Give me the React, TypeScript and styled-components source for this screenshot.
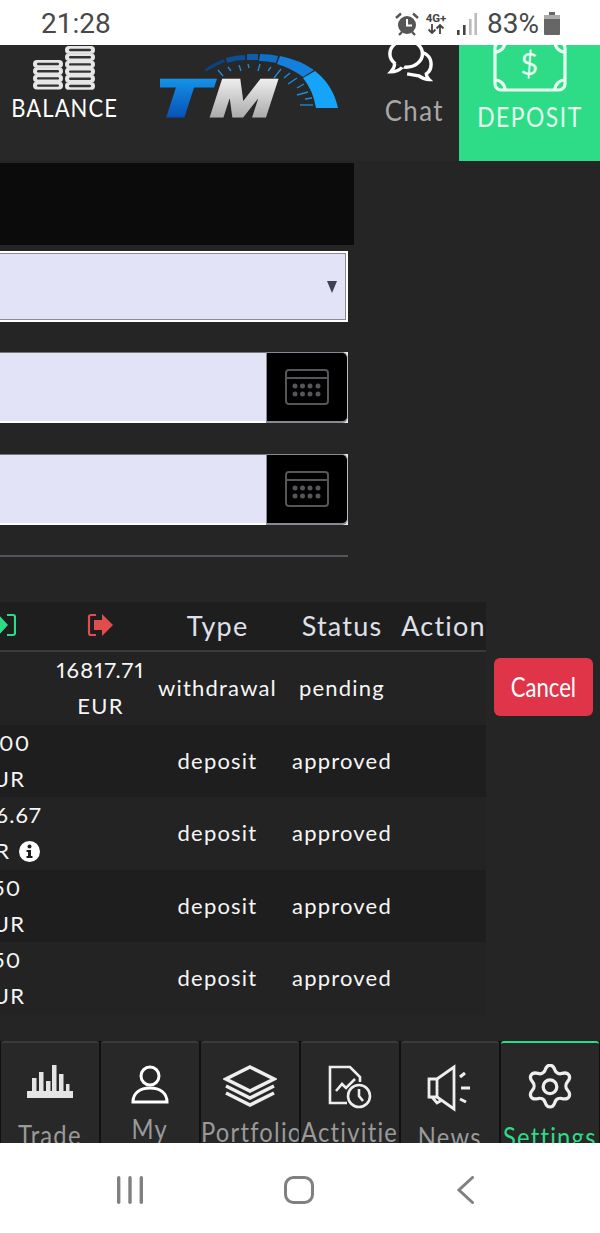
import React from "react";
import styled, { createGlobalStyle } from "styled-components";

const Global = createGlobalStyle`
  html, body { margin: 0; padding: 0; background: #fff; }
  * { box-sizing: border-box; }
  body { font-family: "Lato", "Liberation Sans", sans-serif; }
`;

const Screen = styled.div`
  width: 600px; height: 1233px; overflow: hidden;
  display: flex; flex-direction: column; background: #252525;
`;
const StatusBar = styled.div`
  height: 45px; flex: none; background: #fff; display: flex; align-items: center;
  padding: 2px 40px 0 41px; color: #484848; font-family: "Roboto", sans-serif; font-size: 28px;
`;
const Clock = styled.span` flex: 1; `;
const StatusIcons = styled.div` display: flex; align-items: center; `;
const NetBlock = styled.div`
  display: flex; flex-direction: column; align-items: center; width: 24px; margin: 0 9px 0 4px;
  font: 700 11.5px/11px "Roboto", sans-serif; color: #444;
`;
const Percent = styled.span` margin: 0 5px 0 10px; `;

const Header = styled.header`
  height: 116px; flex: none; background: #282828; display: flex; overflow: hidden;
`;
const NarrowText = styled.span<{ $sx: number }>`
  display: inline-block; white-space: nowrap; transform: scaleX(${(p) => p.$sx});
`;
const BalanceItem = styled.div`
  width: 130px; display: flex; flex-direction: column; align-items: center;
  color: #fff; font-size: 25px; letter-spacing: 1.2px; line-height: 30px;
`;
const LogoItem = styled.div` width: 240px; padding: 8px 0 0 30px; `;
const ChatItem = styled.div`
  width: 89px; display: flex; flex-direction: column; align-items: center;
  color: #a8a8a8; font-size: 29px; letter-spacing: 1.6px; line-height: 34px;
`;
const DepositItem = styled.div`
  width: 141px; background: #2edc87; display: flex; flex-direction: column; align-items: center;
  color: #e4fff0; font-size: 26px; letter-spacing: 1.7px; line-height: 30px;
`;
const HeaderIcon = styled.svg<{ $mb: number; $mt?: number; $mr?: number }>`
  display: block; flex: none; margin-bottom: ${(p) => p.$mb}px; margin-top: ${(p) => p.$mt ?? 0}px;
  margin-right: ${(p) => p.$mr ?? 0}px;
`;

const Main = styled.main`
  flex: 1; min-height: 0; background: #252525; padding-top: 2px;
`;
const Content = styled.div` margin-left: -45px; width: 645px; `;
const BlackBox = styled.div` width: 399px; height: 82px; background: #0b0b0b; margin-bottom: 6px; `;
const SelectField = styled.div`
  width: 393px; height: 71px; background: #e3e3f8; border: 2px solid #fff; outline: 1px solid #8b8b94; outline-offset: -3px;
  display: flex; align-items: center; justify-content: flex-end; padding-right: 9px; margin-bottom: 30px;
`;
const Caret = styled.div`
  width: 0; height: 0; border-left: 5.5px solid transparent; border-right: 5.5px solid transparent;
  border-top: 12px solid #3e4150;
`;
const DateGroup = styled.div<{ $mb: number }>`
  width: 393px; height: 71px; display: flex; margin-bottom: ${(p) => p.$mb}px; background: #e8e8e8;
`;
const DateInput = styled.div`
  flex: 1; background: #e3e3f8; border-bottom: 2px solid #fff; border-top: 1px solid #777;
`;
const DateAddon = styled.div`
  width: 82px; background: #000; border: 1px solid #858a93; border-bottom-width: 2px; border-right-color: #b8bcc2;
  border-radius: 0 6px 6px 0; display: flex; align-items: center; justify-content: center;
`;
const Divider = styled.hr`
  width: 393px; height: 2px; margin: 0 0 45px; border: 0; background: #55555e;
`;

const TableHead = styled.div`
  width: 531px; height: 50px; background: #1e1e1e; border-bottom: 2px solid #3a3a3a; padding-bottom: 2px;
  display: grid; grid-template-columns: 94px 103px 131px 118px 85px; align-items: center;
  color: #dfe0ea; font-size: 27px; letter-spacing: 1.2px; text-align: center;
`;
const HeadCell = styled.div` display: flex; justify-content: center; white-space: nowrap; `;
const RowWrap = styled.div` display: flex; align-items: center; height: 72.5px; `;
const Row = styled.div<{ $alt: boolean }>`
  width: 531px; height: 100%; background: ${(p) => (p.$alt ? "#1e1e1e" : "#232323")};
  display: grid; grid-template-columns: 94px 103px 131px 118px 85px; align-items: center;
  color: #f6f6f6; font-size: 22px; letter-spacing: 1.2px; line-height: 36px; text-align: center;
  font-feature-settings: "pnum" 1; font-variant-numeric: proportional-nums;
`;
const Cell = styled.div` white-space: nowrap; position: relative; `;
const Info = styled.svg` vertical-align: -3px; margin-left: 9px; `;
const CancelBtn = styled.button`
  width: 99px; height: 58px; margin: 0 0 2px 8px; background: #e03549; border: 0; border-radius: 6px;
  color: #fff; font: 400 26px "Lato", sans-serif; padding: 0;
`;

const BottomNav = styled.nav`
  height: 102px; flex: none; display: grid; grid-template-columns: repeat(6, 100px); overflow: hidden; background: #111;
`;
const Tab = styled.div<{ $active?: boolean }>`
  height: 102px; margin: 0 1px; background: #282828; overflow: hidden; border-radius: 3px 3px 0 0;
  border-top: 2px solid ${(p) => (p.$active ? "#2edc87" : "#3a3a3a")};
  display: flex; flex-direction: column; align-items: center;
  color: ${(p) => (p.$active ? "#2edc87" : "#9a9a9a")};
`;
const TabIcon = styled.svg` display: block; flex: none; margin-top: 21px; `;
const TabLabel = styled.div<{ $mt: number }>`
  margin-top: ${(p) => p.$mt}px; font-size: 27px; line-height: 32px; letter-spacing: 1.4px; white-space: nowrap;
  align-self: flex-start; flex: none; width: 111px; overflow: hidden; text-align: center;
  transform-origin: 0 0; transform: scaleX(0.88);
`;

const AndroidBar = styled.div`
  height: 90px; flex: none; background: #fff; display: grid; grid-template-columns: 117px 26px 141px 30px 143px 17px; align-items: center; padding-top: 4px;
`;
const Spacer = styled.div``;

const AlarmIcon = () => (
  <svg width="26" height="24" viewBox="0 0 26 24">
    <circle cx="13" cy="13" r="9" fill="#555" />
    <path d="M13 7v6.5h5" fill="none" stroke="#fff" strokeWidth="2" />
    <path d="M2 6l5-4.5M24 6l-5-4.5M5 23l3-3M21 23l-3-3" stroke="#555" strokeWidth="2.4" fill="none" />
  </svg>
);
const SignalIcon = () => (
  <svg width="20" height="22" viewBox="0 0 20 22">
    <rect x="0" y="17" width="2.6" height="5" fill="#444" />
    <rect x="6" y="12" width="2.6" height="10" fill="#444" />
    <rect x="12" y="6" width="2.6" height="16" fill="#bbb" />
    <rect x="17.4" y="0" width="2.6" height="22" fill="#bbb" />
  </svg>
);
const BatteryIcon = () => (
  <svg width="16" height="23" viewBox="0 0 16 23">
    <path d="M5 0h6v3h4a1 1 0 0 1 1 1v18a1 1 0 0 1-1 1H1a1 1 0 0 1-1-1V4a1 1 0 0 1 1-1h4z" fill="#666" />
    <rect x="0" y="3" width="16" height="4" fill="#aaa" />
  </svg>
);
const CoinStack = ({ x, top, n }: { x: number; top: number; n: number }) => (
  <g>
    {Array.from({ length: n }).map((_, i) => (
      <g key={i}>
        <rect x={x} y={top + i * 7.2} width="30" height="7.8" rx="3.9" fill="#e6e6e6" />
        <rect x={x + 4} y={top + 2.8 + i * 7.2} width="22" height="2.4" rx="1.2" fill="#333" />
      </g>
    ))}
  </g>
);
const CoinsIcon = () => (
  <HeaderIcon $mb={1} $mt={1} width="64" height="45" viewBox="0 0 64 45">
    <CoinStack x={0} top={14} n={4} />
    <CoinStack x={32} top={0} n={6} />
  </HeaderIcon>
);
const ChatIcon = () => (
  <HeaderIcon $mb={11} $mt={-8} $mr={9} width="46" height="45" viewBox="0 0 48 46">
    <path d="M30 15c10 0 16 5 16 13 0 4-2 8-5 10 0 2 1 4 3 6-5 0-8-2-11-4l-12-2" fill="none" stroke="#fff" strokeWidth="3.6" />
    <ellipse cx="20" cy="17" rx="17" ry="14" fill="#282828" stroke="#fff" strokeWidth="3.6" />
    <path d="M8 27c0 3-1 6-4 9 5 0 9-2 12-5" fill="#282828" stroke="#fff" strokeWidth="3.4" />
    <path d="M10 26l8 4" stroke="#282828" strokeWidth="4" />
  </HeaderIcon>
);
const NoteIcon = () => (
  <HeaderIcon $mb={10} $mt={-5} width="74" height="52" viewBox="0 0 74 52" fill="none" stroke="#e8fff2" strokeWidth="3.2">
    <rect x="2" y="2" width="70" height="48" rx="6" />
    <path d="M2 12a10 10 0 0 0 10-10M62 2a10 10 0 0 0 10 10M72 40a10 10 0 0 0-10 10M12 50a10 10 0 0 0-10-10" />
    <text x="37" y="35" textAnchor="middle" fill="#e8fff2" stroke="none" fontSize="31" fontFamily="Lato, sans-serif">$</text>
  </HeaderIcon>
);

const ticks = [
  [218, 70, 223, 76], [228, 67, 231, 71], [239, 65, 241, 71], [248, 64, 249, 68], [260, 64, 258, 71],
  [271, 67, 268, 71], [281, 69, 274, 78], [290, 73, 284, 78], [297, 78, 288, 84], [304, 84, 297, 88],
  [308, 92, 297, 95], [312, 98, 305, 99], [313, 105, 300, 105],
];
const Logo = () => (
  <svg width="180" height="67" viewBox="160 53 180 67">
    <defs>
      <linearGradient id="tmBlue" x1="0" y1="0" x2="0" y2="1">
        <stop offset="0" stopColor="#18a2f6" />
        <stop offset="1" stopColor="#0442a8" />
      </linearGradient>
      <linearGradient id="tmGrey" x1="0" y1="0" x2="0" y2="1">
        <stop offset="0" stopColor="#ffffff" />
        <stop offset="1" stopColor="#9a9a9a" />
      </linearGradient>
    </defs>
    <path d="M315 71Q333 85 338 108H316Q313 90 303 78Z" fill="#16a4fb" />
    <path d="M280 56Q300 60 314 70L303 77Q291 68 277 64Z" fill="#1280dc" />
    <path d="M260 54Q270 54 278 56L276 63Q268 61 259 61Z" fill="#0f6fc6" />
    <polygon points="247,54 258,54 258,60 247,60" fill="#0d5fae" />
    <path d="M226 58Q235 55 245 55V60Q236 60 227 63Z" fill="#0c4f94" />
    <path d="M204 70Q213 63 224 59L225 62Q215 66 207 71Z" fill="#0b4380" />
    {ticks.map((t, i) => (
      <line key={i} x1={t[0]} y1={t[1]} x2={t[2]} y2={t[3]} stroke="#1b8fdc" strokeWidth="1.3" />
    ))}
    <g transform="skewX(-18)" fontFamily="Liberation Sans, sans-serif" fontWeight="700" fontSize="52">
      <text x="186" y="116" textLength="55" lengthAdjust="spacingAndGlyphs" fill="url(#tmBlue)" stroke="url(#tmBlue)" strokeWidth="3">T</text>
      <text x="245" y="116" textLength="62" lengthAdjust="spacingAndGlyphs" fill="url(#tmGrey)" stroke="url(#tmGrey)" strokeWidth="3">M</text>
    </g>
  </svg>
);
const EnterIcon = () => (
  <svg width="27" height="24" viewBox="0 0 27 24">
    <path d="M0 7h8V0l11 12-11 12v-7H0z" fill="#2edc87" />
    <path d="M18 2h6a2 2 0 0 1 2 2v16a2 2 0 0 1-2 2h-6" fill="none" stroke="#2edc87" strokeWidth="2.2" />
  </svg>
);
const ExitIcon = () => (
  <svg width="27" height="24" viewBox="0 0 27 24">
    <path d="M9 2H4a2 2 0 0 0-2 2v16a2 2 0 0 0 2 2h5" fill="none" stroke="#e04d4d" strokeWidth="2.2" />
    <path d="M7 7h8V1l11 11-11 11v-6H7z" fill="#e04d4d" />
  </svg>
);
const InfoIcon = () => (
  <Info width="21" height="21" viewBox="0 0 21 21">
    <circle cx="10.5" cy="10.5" r="10.5" fill="#fff" />
    <circle cx="10.5" cy="5.5" r="2" fill="#1e1e1e" />
    <path d="M7.5 9h4.5v6h1.5v2h-6v-2H9v-4H7.5z" fill="#1e1e1e" />
  </Info>
);
const CalendarIcon = () => (
  <svg width="44" height="36" viewBox="0 0 44 36" fill="none">
    <rect x="1" y="1" width="42" height="34" rx="3" stroke="#55555a" strokeWidth="2" />
    <path d="M1 9h42" stroke="#55555a" strokeWidth="2" />
    {[10, 17.5, 25, 33].map((x) =>
      [17, 25].map((y) => <circle key={`${x}-${y}`} cx={x} cy={y} r="2.5" fill="#55555a" />)
    )}
  </svg>
);

const BarsTab = () => (
  <TabIcon width="46" height="44" viewBox="0 0 46 44" fill="#e4e4e4">
    <rect x="0" y="27" width="46" height="7" />
    <rect x="5" y="14" width="4.500" height="14" /><rect x="12" y="8" width="4.500" height="20" />
    <rect x="19" y="17" width="4.500" height="11" /><rect x="25" y="1" width="4.500" height="27" />
    <rect x="32" y="10" width="4.500" height="18" /><rect x="39" y="20" width="3.500" height="8" />
  </TabIcon>
);
const UserTab = () => (
  <TabIcon width="40" height="44" viewBox="0 0 40 44" fill="none" stroke="#fff" strokeWidth="3">
    <circle cx="20" cy="12" r="9" />
    <path d="M3 38c0-9 7-14 17-14s17 5 17 14z" />
  </TabIcon>
);
const LayersTab = () => (
  <TabIcon width="54" height="46" viewBox="0 0 54 46" fill="none" stroke="#eee" strokeWidth="3.4">
    <path d="M27 3l24 12-24 12L3 15z" />
    <path d="M3 22l24 12 24-12" />
    <path d="M3 29l24 12 24-12" />
  </TabIcon>
);
const ActivityTab = () => (
  <TabIcon width="46" height="46" viewBox="0 0 46 46" fill="none" stroke="#eee" strokeWidth="2.6">
    <path d="M20 39H3V3h20l10 10v5" />
    <path d="M9 27l6-7 4 4 9-9" />
    <circle cx="32" cy="32" r="11" fill="#282828" />
    <path d="M32 25v7l4 5" />
  </TabIcon>
);
const NewsTab = () => (
  <TabIcon width="46" height="48" viewBox="0 0 46 48" fill="none" stroke="#eee" strokeWidth="2.8">
    <path d="M27 3v42L10 33H2V15h8z" />
    <path d="M10 15v18M5 33l5 6 5-3" />
    <path d="M33 13l5-4M34 24h9M33 35l6 3" strokeWidth="3" />
  </TabIcon>
);
const GearTab = () => (
  <TabIcon width="46" height="48" viewBox="3 2.5 18 19" fill="none" stroke="#eee" strokeWidth="1.3" strokeLinejoin="round">
    <path d="M12 1.500c1.200 0 1.600.8 2 2 .4 1.100 1.600 1.700 2.800 1.200 1.200-.3 2-.4 2.700.7.600 1 .2 1.800-.6 2.700-.8.900-.8 2.300 0 3.200.8.900 1.200 1.700.6 2.700-.7 1.100-1.500 1-2.700.7-1.200-.4-2.400.2-2.800 1.300-.4 1.200-.8 2-2 2s-1.600-.8-2-2c-.4-1.100-1.600-1.700-2.800-1.300-1.200.3-2 .4-2.700-.7-.6-1-.2-1.800.6-2.700.8-.9.8-2.300 0-3.200-.8-.9-1.200-1.700-.6-2.700.7-1.100 1.500-1 2.700-.7 1.200.5 2.400-.1 2.800-1.200.4-1.200.8-2 2-2z" transform="translate(0 1.500)" />
    <circle cx="12" cy="11.500" r="2.700" />
  </TabIcon>
);

const rows = [
  { inn: "", out: ["16817.71", "EUR"], type: "withdrawal", status: "pending", cancel: true },
  { inn: ["1000", "EUR"], out: "", type: "deposit", status: "approved" },
  { inn: ["1166.67", "EUR"], out: "", type: "deposit", status: "approved", info: true },
  { inn: ["150", "EUR"], out: "", type: "deposit", status: "approved" },
  { inn: ["150", "EUR"], out: "", type: "deposit", status: "approved" },
];

export default function App() {
  return (
    <Screen>
      <Global />
      <StatusBar>
        <Clock>21:28</Clock>
        <StatusIcons>
          <AlarmIcon />
          <NetBlock>
            <span>4G+</span>
            <svg width="18" height="10" viewBox="0 0 18 10" fill="none" stroke="#444" strokeWidth="1.800">
              <path d="M5 0v9M1.500 5.500L5 9l3.500-3.500M13 10V1M9.500 4.500L13 1l3.500 3.500" />
            </svg>
          </NetBlock>
          <SignalIcon />
          <Percent>83%</Percent>
          <BatteryIcon />
        </StatusIcons>
      </StatusBar>

      <Header>
        <BalanceItem>
          <CoinsIcon />
          <NarrowText $sx={0.88}>BALANCE</NarrowText>
        </BalanceItem>
        <LogoItem><Logo /></LogoItem>
        <ChatItem>
          <ChatIcon />
          <NarrowText $sx={0.89}>Chat</NarrowText>
        </ChatItem>
        <DepositItem>
          <NoteIcon />
          <NarrowText $sx={0.88}>DEPOSIT</NarrowText>
        </DepositItem>
      </Header>

      <Main>
        <Content>
          <BlackBox />
          <SelectField><Caret /></SelectField>
          <DateGroup $mb={31}>
            <DateInput />
            <DateAddon><CalendarIcon /></DateAddon>
          </DateGroup>
          <DateGroup $mb={30}>
            <DateInput />
            <DateAddon><CalendarIcon /></DateAddon>
          </DateGroup>
          <Divider />
          <TableHead>
            <HeadCell><EnterIcon /></HeadCell>
            <HeadCell><ExitIcon /></HeadCell>
            <HeadCell>Type</HeadCell>
            <HeadCell>Status</HeadCell>
            <HeadCell>Action</HeadCell>
          </TableHead>
          {rows.map((r, i) => (
            <RowWrap key={i}>
              <Row $alt={i % 2 === 1}>
                <Cell>
                  {Array.isArray(r.inn) && (
                    <>
                      {r.inn[0]}
                      <br />
                      {r.inn[1]}
                      {r.info && <InfoIcon />}
                    </>
                  )}
                </Cell>
                <Cell>
                  {Array.isArray(r.out) && (
                    <>
                      {r.out[0]}
                      <br />
                      {r.out[1]}
                    </>
                  )}
                </Cell>
                <Cell>{r.type}</Cell>
                <Cell>{r.status}</Cell>
                <Cell />
              </Row>
              {r.cancel && <CancelBtn><NarrowText $sx={0.85}>Cancel</NarrowText></CancelBtn>}
            </RowWrap>
          ))}
        </Content>
      </Main>

      <BottomNav>
        <Tab><BarsTab /><TabLabel $mt={11}>Trade</TabLabel></Tab>
        <Tab><UserTab /><TabLabel $mt={5}>My</TabLabel></Tab>
        <Tab><LayersTab /><TabLabel $mt={6}>Portfolio</TabLabel></Tab>
        <Tab><ActivityTab /><TabLabel $mt={6}>Activities</TabLabel></Tab>
        <Tab><NewsTab /><TabLabel $mt={9}>News</TabLabel></Tab>
        <Tab $active><GearTab /><TabLabel $mt={9}>Settings</TabLabel></Tab>
      </BottomNav>

      <AndroidBar>
        <Spacer />
        <svg width="26" height="28" viewBox="0 0 26 28" fill="#808080">
          <rect x="0" y="0" width="3.400" height="28" rx="1.700" />
          <rect x="11.300" y="0" width="3.400" height="28" rx="1.700" />
          <rect x="22.600" y="0" width="3.400" height="28" rx="1.700" />
        </svg>
        <Spacer />
        <svg width="30" height="28" viewBox="0 0 30 28" fill="none">
          <rect x="1.500" y="1.500" width="27" height="25" rx="8" stroke="#808080" strokeWidth="3" />
        </svg>
        <Spacer />
        <svg width="17" height="28" viewBox="0 0 17 28" fill="none">
          <path d="M15.500 1.500L2 14l13.500 12.500" stroke="#808080" strokeWidth="3" strokeLinecap="round" />
        </svg>
      </AndroidBar>
    </Screen>
  );
}
